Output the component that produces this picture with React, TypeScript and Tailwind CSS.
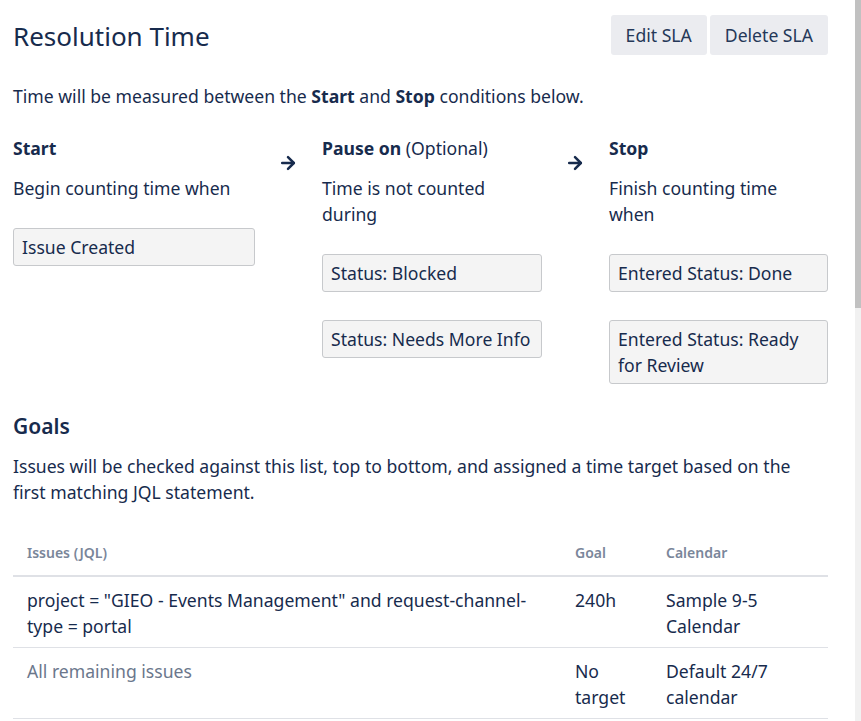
import { ArrowRight } from "lucide-react";

type Condition = {
  title: string;
  note?: string;
  desc: string;
  items: string[];
  width: string;
};

const conditions: Condition[] = [
  { title: "Start", desc: "Begin counting time when", items: ["Issue Created"], width: "w-[242px]" },
  {
    title: "Pause on",
    note: "(Optional)",
    desc: "Time is not counted during",
    items: ["Status: Blocked", "Status: Needs More Info"],
    width: "w-[220px]",
  },
  {
    title: "Stop",
    desc: "Finish counting time when",
    items: ["Entered Status: Done", "Entered Status: Ready for Review"],
    width: "w-[219px]",
  },
];

const goals = [
  { jql: "project = \"GIEO - Events Management\" and request-channel-type = portal", goal: "240h", calendar: "Sample 9-5 Calendar", muted: false },
  { jql: "All remaining issues", goal: "No target", calendar: "Default 24/7 calendar", muted: true },
];

function ConditionColumn({ c }: { c: Condition }) {
  return (
    <div className={`${c.width} shrink-0`}>
      <h3 className="text-[17.6px] leading-[26px] py-[2px]">
        <span className="font-bold">{c.title}</span>
        {c.note && <span> {c.note}</span>}
      </h3>
      <p className="mt-[12px] pr-[8px] text-[17.6px] leading-[26px]">{c.desc}</p>
      <div className="mt-[27px] flex flex-col gap-[28px]">
        {c.items.map((item) => (
          <div
            key={item}
            className="rounded-[3px] border border-[#c7c9cc] bg-[#f4f4f4] pl-[8px] pr-[6px] py-[5px] text-[17.6px] leading-[26px]"
          >
            {item}
          </div>
        ))}
      </div>
    </div>
  );
}

export default function App() {
  return (
    <div
      className="relative min-h-[721px] bg-white text-[#172b4d]"
      style={{ fontFamily: '"Noto Sans", sans-serif' }}
    >
      <div className="w-[815px] ml-[13px] pt-[15px] pb-4">
        <div className="flex items-start justify-between">
          <h1 className="mt-[3px] text-[26px] leading-[36px]">Resolution Time</h1>
          <div className="flex gap-[3px]">
            <button className="h-[40px] rounded-[3px] bg-[#ebecf0] px-[15px] text-[17.6px] text-[#253858]">
              Edit SLA
            </button>
            <button className="h-[40px] rounded-[3px] bg-[#ebecf0] px-[15px] text-[17.6px] text-[#253858]">
              Delete SLA
            </button>
          </div>
        </div>

        <p className="mt-[28px] text-[17.6px] leading-[26px]">
          Time will be measured between the <b>Start</b> and <b>Stop</b> conditions below.
        </p>

        <div className="mt-[24px] flex">
          {conditions.map((c, i) => (
            <div key={c.title} className="flex">
              {i > 0 && (
                <div className="w-[67px] shrink-0 pt-[20px] pl-[23px]">
                  <ArrowRight size={20} strokeWidth={3} className="text-[#172b4d]" />
                </div>
              )}
              <ConditionColumn c={c} />
            </div>
          ))}
        </div>

        <h2 className="mt-[27px] text-[21px] leading-[30px] font-semibold">Goals</h2>
        <p className="mt-[12px] max-w-[800px] text-[17.6px] leading-[26px]">
          Issues will be checked against this list, top to bottom, and assigned a time target based on the first
          matching JQL statement.
        </p>

        <table className="mt-[27px] w-full border-collapse">
          <thead>
            <tr className="border-b-2 border-[#dfe1e6] text-left text-[14px] font-semibold text-[#7a869a]">
              <th className="px-[14px] pt-[10px] pb-[12px] font-semibold">Issues (JQL)</th>
              <th className="w-[91px] px-[14px] pt-[10px] pb-[12px] font-semibold">Goal</th>
              <th className="w-[176px] px-[14px] pt-[10px] pb-[12px] font-semibold">Calendar</th>
            </tr>
          </thead>
          <tbody>
            {goals.map((g) => (
              <tr key={g.jql} className="border-b border-[#dfe1e6] align-top text-[17.6px] leading-[26px]">
                <td className={`px-[14px] pt-[10px] pb-[8px] ${g.muted ? "text-[#6b778c]" : ""}`}>{g.jql}</td>
                <td className="px-[14px] pt-[10px] pb-[8px]">{g.goal}</td>
                <td className="px-[14px] pt-[10px] pb-[8px]">{g.calendar}</td>
              </tr>
            ))}
          </tbody>
        </table>
      </div>

      {/* page scrollbar */}
      <div className="fixed right-0 top-0 h-[721px] w-[6px] bg-[#f1f1f1]">
        <div className="h-[308px] w-full bg-[#c1c1c1]" />
      </div>
    </div>
  );
}
